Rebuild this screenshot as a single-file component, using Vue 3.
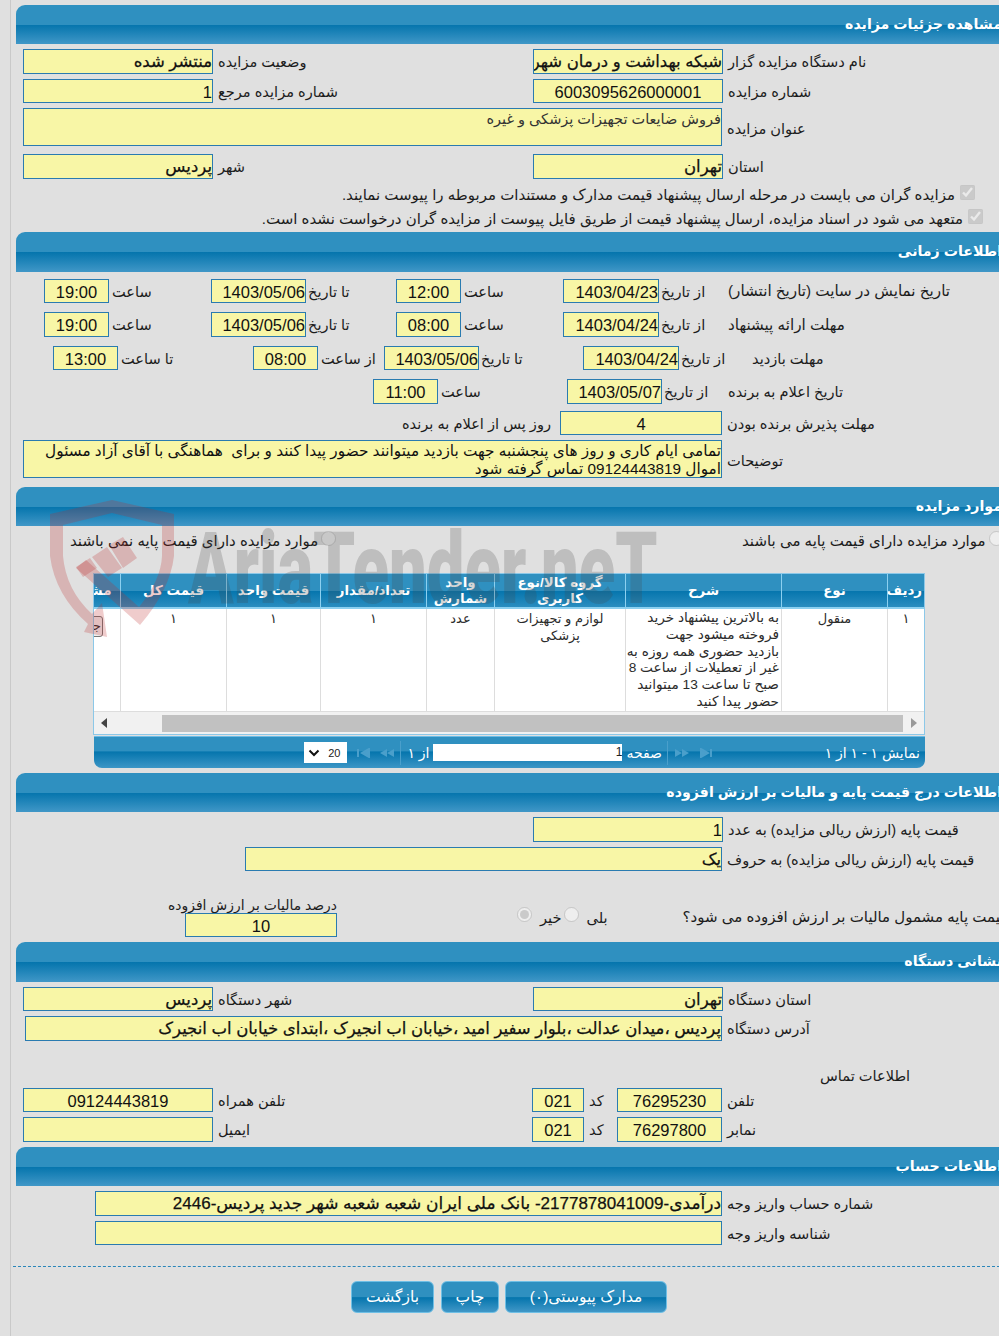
<script setup>
const headers = ['ردیف', 'نوع', 'شرح', 'گروه کالا/نوع کاربری', 'واحد شمارش', 'تعداد/مقدار', 'قیمت واحد', 'قیمت کل', 'مشاهده']
</script>

<template>
  <div class="page">
    <div class="sheet">
      <section class="sec first">
        <h2 class="head">مشاهده جزئیات مزایده</h2>
        <div class="r two mt5 h25">
          <div class="f"><div class="box w190 bold">منتشر شده</div><span class="lb">وضعیت مزایده</span></div>
          <div class="f"><div class="box w190 bold">شبکه بهداشت و درمان شهرستان پردیس</div><span class="lb">نام دستگاه مزایده گزار</span></div>
        </div>
        <div class="r two mt5 h24">
          <div class="f"><div class="box w190">1</div><span class="lb">شماره مزایده مرجع</span></div>
          <div class="f"><div class="box w190 c">6003095626000001</div><span class="lb">شماره مزایده</span></div>
        </div>
        <div class="f mt5 h38 pl">
          <div class="box area wide">فروش ضایعات تجهیزات پزشکی و غیره</div><span class="lb">عنوان مزایده</span>
        </div>
        <div class="r two mt8 h25">
          <div class="f"><div class="box w190 bold">پردیس</div><span class="lb">شهر</span></div>
          <div class="f"><div class="box w190 bold">تهران</div><span class="lb">استان</span></div>
        </div>
        <div class="check one"><input type="checkbox" checked disabled /><span>مزایده گران می بایست در مرحله ارسال پیشنهاد قیمت مدارک و مستندات مربوطه را پیوست نمایند.</span></div>
        <div class="check two-l"><input type="checkbox" checked disabled /><span>متعهد می شود در اسناد مزایده، ارسال پیشنهاد قیمت از طریق فایل پیوست از مزایده گران درخواست نشده است.</span></div>
      </section>

      <section class="sec">
        <h2 class="head tall">اطلاعات زمانی</h2>
        <div class="r t1 mt7 h24">
          <div class="f"><div class="box w64 c">19:00</div><span class="lb">ساعت</span></div>
          <div class="f"><div class="box w95">1403/05/06</div><span class="lb">تا تاریخ</span></div>
          <div class="f"><div class="box w64 c">12:00</div><span class="lb">ساعت</span></div>
          <div class="f"><div class="box w96">1403/04/23</div><span class="lb">از تاریخ</span></div>
          <span class="lb">تاریخ نمایش در سایت (تاریخ انتشار)</span>
        </div>
        <div class="r t1 mt9 h25">
          <div class="f"><div class="box w64 c">19:00</div><span class="lb">ساعت</span></div>
          <div class="f"><div class="box w95">1403/05/06</div><span class="lb">تا تاریخ</span></div>
          <div class="f"><div class="box w64 c">08:00</div><span class="lb">ساعت</span></div>
          <div class="f"><div class="box w96">1403/04/24</div><span class="lb">از تاریخ</span></div>
          <span class="lb">مهلت ارائه پیشنهاد</span>
        </div>
        <div class="r t3 mt9 h24">
          <div class="f"><div class="box w64 c">13:00</div><span class="lb">تا ساعت</span></div>
          <div class="f"><div class="box w64 c">08:00</div><span class="lb">از ساعت</span></div>
          <div class="f"><div class="box w95">1403/05/06</div><span class="lb">تا تاریخ</span></div>
          <div class="f"><div class="box w96">1403/04/24</div><span class="lb">از تاریخ</span></div>
          <span class="lb">مهلت بازدید</span>
        </div>
        <div class="r t4 mt9 h25">
          <div class="f"><div class="box w64 c">11:00</div><span class="lb">ساعت</span></div>
          <div class="f"><div class="box w95">1403/05/07</div><span class="lb">از تاریخ</span></div>
          <span class="lb">تاریخ اعلام به برنده</span>
        </div>
        <div class="r t5 mt7 h24">
          <span class="lb">روز پس از اعلام به برنده</span>
          <div class="f"><div class="box w162 c">4</div><span class="lb">مهلت پذیرش برنده بودن</span></div>
        </div>
        <div class="f mt5 h38 pl">
          <div class="box area wide"><span class="note">تمامی ایام کاری و روز های پنجشنبه جهت بازدید میتوانند حضور پیدا کنند و برای&nbsp; هماهنگی با آقای آزاد مسئول<br />اموال 09124443819 تماس گرفته شود</span></div><span class="lb">توضیحات</span>
        </div>
      </section>

      <section class="sec s3">
        <h2 class="head">موارد مزایده</h2>
        <div class="radios">
          <label class="rad r-left"><span>موارد مزایده دارای قیمت پایه نمی باشند</span><input type="radio" name="b" disabled /></label>
          <label class="rad r-right"><span>موارد مزایده دارای قیمت پایه می باشند</span><input type="radio" name="b" disabled /></label>
        </div>
        <div class="grid">
          <div class="clip">
            <table>
              <thead>
                <tr><th v-for="h in headers" :key="h">{{ h }}</th></tr>
              </thead>
              <tbody>
                <tr>
                  <td>۱</td>
                  <td>منقول</td>
                  <td class="desc">به بالاترین پیشنهاد خرید<br />فروخته میشود جهت<br />بازدید حضوری همه روزه به<br />غیر از تعطیلات از ساعت 8<br />صبح تا ساعت 13 میتوانید<br />حضور پیدا کنید</td>
                  <td>لوازم و تجهیزات<br />پزشکی</td>
                  <td>عدد</td>
                  <td>۱</td>
                  <td>۱</td>
                  <td>۱</td>
                  <td class="act"><span class="mini">جزئیات</span></td>
                </tr>
              </tbody>
            </table>
          </div>
          <div class="hscroll">
            <svg class="arr" width="8" height="12" viewBox="0 0 8 12"><path d="M7 1v10L1 6z" fill="#444" /></svg>
            <div class="thumb"></div>
            <svg class="arr" width="8" height="12" viewBox="0 0 8 12"><path d="M1 1v10l6-5z" fill="#999" /></svg>
          </div>
        </div>
        <div class="pager">
          <span class="p-info">نمایش ۱ - ۱ از ۱</span>
          <div class="p-mid">
            <svg class="nav" width="14" height="10" viewBox="0 0 14 10"><path d="M2 1v8l7-4zM12 1v8" stroke="#4a9fcb" stroke-width="2" fill="#4a9fcb" /></svg>
            <svg class="nav n0" width="16" height="10" viewBox="0 0 16 10"><path d="M1 1v8l7-4zM8 1v8l7-4z" fill="#4a9fcb" /></svg>
            <i class="sep"></i>
            <span class="p-txt">صفحه</span>
            <div class="p-in">1</div>
            <span class="p-txt">از ۱</span>
            <i class="sep"></i>
            <svg class="nav" width="16" height="10" viewBox="0 0 16 10"><path d="M8 1v8L1 5zM15 1v8L8 5z" fill="#4a9fcb" /></svg>
            <svg class="nav" width="14" height="10" viewBox="0 0 14 10"><path d="M2 1v8M13 1v8L6 5z" stroke="#4a9fcb" stroke-width="2" fill="#4a9fcb" /></svg>
            <div class="p-sel"><span>20</span><svg width="12" height="8" viewBox="0 0 12 8"><path d="M1.5 1.5 6 6l4.5-4.5" fill="none" stroke="#111" stroke-width="2" /></svg></div>
          </div>
        </div>
      </section>

      <section class="sec s4">
        <h2 class="head">اطلاعات درج قیمت پایه و مالیات بر ارزش افزوده</h2>
        <div class="r one-col mt5 h25">
          <div class="f"><div class="box w190">1</div><span class="lb">قیمت پایه (ارزش ریالی مزایده) به عدد</span></div>
        </div>
        <div class="r yek mt5 h24">
          <div class="f"><div class="box w477 bold">یک</div><span class="lb">قیمت پایه (ارزش ریالی مزایده) به حروف</span></div>
        </div>
        <div class="tax">
          <div class="tax-l">
            <span class="lb">درصد مالیات بر ارزش افزوده</span>
            <div class="box w152 h24 c">10</div>
          </div>
          <div class="tax-r">
            <input class="radio-a" type="radio" name="v" checked disabled />
            <span class="lb">خیر</span>
            <input class="radio-b" type="radio" name="v" disabled />
            <span class="lb">بلی</span>
            <span class="lb q">قیمت پایه مشمول مالیات بر ارزش افزوده می شود؟</span>
          </div>
        </div>
      </section>

      <section class="sec s5">
        <h2 class="head tall">نشانی دستگاه</h2>
        <div class="r two mt5 h24">
          <div class="f"><div class="box w190 bold">پردیس</div><span class="lb">شهر دستگاه</span></div>
          <div class="f"><div class="box w190 bold">تهران</div><span class="lb">استان دستگاه</span></div>
        </div>
        <div class="f mt5 h25 pl2">
          <div class="box w697 bold">پردیس ،میدان عدالت ،بلوار سفیر امید ،خیابان اب انجیرک ،ابتدای خیابان اب انجیرک</div><span class="lb">آدرس دستگاه</span>
        </div>
        <div class="contact">اطلاعات تماس</div>
        <div class="r phones h24">
          <div class="f"><div class="box w190 c">09124443819</div><span class="lb">تلفن همراه</span></div>
          <div class="f"><div class="box w52 c">021</div><span class="lb">کد</span></div>
          <div class="f"><div class="box w105 c">76295230</div><span class="lb">تلفن</span></div>
        </div>
        <div class="r phones mt5 h25">
          <div class="f"><div class="box w190"></div><span class="lb">ایمیل</span></div>
          <div class="f"><div class="box w52 c">021</div><span class="lb">کد</span></div>
          <div class="f"><div class="box w105 c">76297800</div><span class="lb">نمابر</span></div>
        </div>
      </section>

      <section class="sec s6">
        <h2 class="head">اطلاعات حساب</h2>
        <div class="f mt5 h25 pl3">
          <div class="box w627 bold acc">درآمدی-2177878041009- بانک ملی ایران شعبه شعبه شهر جدید پردیس-2446</div><span class="lb">شماره حساب واریز وجه</span>
        </div>
        <div class="f mt5 h24 pl3">
          <div class="box w627"></div><span class="lb">شناسه واریز وجه</span>
        </div>
        <div class="dash"></div>
        <div class="btns">
          <button class="btn b1" type="button">بازگشت</button>
          <button class="btn b2" type="button">چاپ</button>
          <button class="btn b3" type="button">مدارک پیوستی(۰)</button>
        </div>
      </section>
    </div>

    <div class="wm-text">AriaTender.neT</div>
    <svg class="wm-shield" width="140" height="150" viewBox="45 495 140 150">
      <path d="M50 514 112 500 174 514V556Q170 590 140 625L76 568 86 560 139 607Q161 580 162 556V525L112 513 63 525V556Q66 590 92 614L102 603 107 637 84 632 88 624Q55 595 50 556Z" />
      <path d="M76 567 90 558 97 568 83 577ZM92 557 107 547 122 568 108 577ZM109 545 123 537 137 558 123 568Z" />
    </svg>
  </div>
</template>

<style scoped>
.page {
  position: relative;
  width: 999px;
  height: 1336px;
  overflow: hidden;
  background: #e0e0e0;
  padding-left: 10px;
  box-sizing: border-box;
  font-family: "Liberation Sans", "DejaVu Sans", sans-serif;
  color: #1c1c1c;
  font-size: 14.6px;
}
.sheet {
  width: 1000px;
  height: 1336px;
  box-sizing: border-box;
  border-left: 1px solid #c9c9c9;
  padding-left: 5px;
}
.sec.first { padding-top: 5px; }
.head {
  margin: 0;
  height: 39px;
  box-sizing: border-box;
  border-top-left-radius: 9px;
  background: linear-gradient(#2f90c0 0, #2f90c0 50%, #0575ad 51%, #4097c7 100%);
  color: #fff;
  font-size: 14.2px;
  font-weight: bold;
  line-height: 39px;
  direction: rtl;
  text-align: right;
  padding-right: 8px;
  white-space: nowrap;
  overflow: hidden;
}
.head.tall { height: 40px; }
.r { display: grid; padding-left: 7px; align-items: center; }
.r > .lb { justify-self: start; }
.two { grid-template-columns: 510px auto; }
.t1 { grid-template-columns: 167px 185px 167px 165px auto; padding-left: 28px; }
.t1 > .lb { font-size: 15.2px; }
.t3 { grid-template-columns: 200px 131px 199px 169px auto; padding-left: 37px; }
.t4 { grid-template-columns: 194px 161px auto; padding-left: 357px; }
.t5 { grid-template-columns: 544px auto; padding-left: 0; }
.r.t5 > .lb { justify-self: end; margin-right: 9px; }
.one-col { grid-template-columns: auto; padding-left: 517px; }
.yek { grid-template-columns: auto; padding-left: 229px; }
.phones { grid-template-columns: 509px 85px auto; }
.f { display: flex; align-items: center; gap: 5px; min-width: 0; }
.t1 .f, .t3 .f, .t4 .f { gap: 3px; }
.w95 + .lb, .w96 + .lb { margin-left: -1px; }
.h38 > .lb { margin-top: 3px; }
.pl { padding-left: 7px; }
.pl2 { padding-left: 9px; }
.pl3 { padding-left: 79px; }
.mt5 { margin-top: 5px; }
.mt7 { margin-top: 7px; }
.mt8 { margin-top: 8px; }
.mt9 { margin-top: 9px; }
.h24, .h24 .box { height: 24px; }
.h25, .h25 .box { height: 25px; }
.h38, .h38 .box { height: 38px; }
.box {
  box-sizing: border-box;
  flex: none;
  border: 1px solid #2a7bb0;
  background: #f8f6a6;
  color: #111;
  direction: rtl;
  text-align: right;
  white-space: nowrap;
  overflow: hidden;
  font-size: 16.5px;
  line-height: 24px;
}
.bold { font-size: 16.5px; line-height: 23px; -webkit-text-stroke: 0.25px #111; }
.acc { font-size: 17px; }
.c { text-align: center; }
.area { font-size: 14.5px; line-height: 18px; color: #333; padding-top: 1px; }
.note { font-size: 15.3px; line-height: 18px; display: block; color: #111; }
.wide { width: 699px; }
.w190 { width: 190px; }
.w64 { width: 65px; }
.w95 { width: 95px; }
.w96 { width: 96px; }
.w162 { width: 162px; }
.w477 { width: 477px; }
.w152 { width: 152px; }
.w697 { width: 697px; }
.w52 { width: 52px; }
.w105 { width: 105px; }
.w627 { width: 627px; }
.lb { direction: rtl; white-space: nowrap; font-size: 14.6px; }

.check {
  display: flex;
  direction: rtl;
  align-items: center;
  height: 24px;
  white-space: nowrap;
  gap: 5px;
  font-size: 15px;
}
.check input { width: 15px; height: 15px; margin: 0 0 6px 0; }
.check.one { margin-top: 4px; padding-right: 35px; }
.check.two-l { padding-right: 27px; margin-bottom: 1px; }

.s3 { margin-top: 9px; }
.s3 .radios { position: relative; height: 47px; }
.rad { position: absolute; top: 5px; display: flex; align-items: center; gap: 3px; white-space: nowrap; direction: ltr; font-size: 15px; }
.rad input { width: 15px; height: 15px; margin: 0 0 4px 0; }
.r-left { left: 54px; }
.r-right { left: 726px; }

.grid {
  margin-left: 77px;
  width: 832px;
  box-sizing: border-box;
  border: 1px solid #8cc8e8;
  background: #fff;
}
.clip { overflow: hidden; direction: rtl; }
table {
  border-collapse: separate;
  border-spacing: 0;
  table-layout: fixed;
  width: 874px;
  direction: rtl;
}
th {
  height: 35px;
  padding: 0 2px;
  box-sizing: border-box;
  background: linear-gradient(#2f90c0 0, #2f90c0 50%, #0575ad 51%, #2a8dc0 100%);
  color: #fff;
  font-size: 13.4px;
  font-weight: bold;
  line-height: 16px;
  border-left: 1px solid #8cd0f0;
  border-bottom: 2px solid #8cd0f0;
  white-space: normal;
  overflow: hidden;
}
th:nth-child(1) { width: 37px; }
th:nth-child(2) { width: 106px; }
th:nth-child(3) { width: 156px; }
th:nth-child(4) { width: 131px; }
th:nth-child(5) { width: 68px; }
th:nth-child(6) { width: 106px; }
th:nth-child(7) { width: 94px; }
th:nth-child(8) { width: 106px; }
th:nth-child(9) { width: 70px; }
td {
  height: 103px;
  box-sizing: border-box;
  padding: 1px 2px 0;
  vertical-align: top;
  text-align: center;
  font-size: 13px;
  line-height: 17px;
  color: #2b2b2b;
  border-left: 1px solid #ddd;
  border-bottom: 1px solid #ddd;
  overflow: hidden;
  white-space: nowrap;
}
td.desc { text-align: right; font-size: 13.7px; line-height: 16.8px; }
td.act { text-align: right; padding: 7px 17px 0 0; }
.mini {
  display: inline-block;
  height: 21px;
  box-sizing: border-box;
  padding: 0 1px;
  border: 1px solid #777;
  border-radius: 3px;
  background: #efefef;
  font-size: 13px;
}
.hscroll {
  display: flex;
  align-items: center;
  height: 22px;
  background: #f1f1f1;
  direction: ltr;
}
.arr { flex: none; }
.hscroll .arr:first-child { margin: 0 0 0 6px; }
.hscroll .arr:last-child { margin-left: 7px; }
.thumb { margin-left: 54px; width: 741px; height: 17px; background: #c1c1c1; }
.pager {
  margin: 1px 0 0 78px;
  width: 831px;
  height: 32px;
  box-sizing: border-box;
  border-top: 1px solid #6cbce6;
  border-bottom-left-radius: 8px;
  border-bottom-right-radius: 8px;
  background: linear-gradient(#2f90c0 0, #2f90c0 45%, #0575ad 48%, #3c96c6 100%);
  display: flex;
  align-items: center;
  direction: rtl;
  color: #fff;
}
.p-info { margin-right: 5px; font-size: 14px; white-space: nowrap; flex: none; width: 99px; text-align: right; }
.p-mid { display: flex; align-items: center; direction: rtl; margin-right: 108px; }
.p-txt { font-size: 14px; white-space: nowrap; }
.nav { flex: none; margin-left: 9px; }
.nav.n0 { margin-left: 0; }
.sep { width: 1px; height: 24px; background: #4a9fcb; margin: 0 6px 0 5px; flex: none; }
.p-in {
  width: 189px;
  height: 17px;
  background: #fff;
  color: #222;
  font-size: 12px;
  line-height: 17px;
  text-align: right;
  margin: 0 4px;
  flex: none;
}
.p-sel {
  width: 43px;
  height: 21px;
  background: #fff;
  color: #222;
  display: flex;
  align-items: center;
  justify-content: space-between;
  padding: 0 7px 0 4px;
  box-sizing: border-box;
  font-size: 11px;
  direction: rtl;
}
.s4 { margin-top: 5px; }
.tax { position: relative; height: 66px; }
.tax-l { position: absolute; left: 153px; width: 168px; top: 26px; display: flex; flex-direction: column; align-items: flex-end; }
.tax-l .lb { line-height: 16px; font-size: 13.9px; }
.tax-r { position: absolute; left: 501px; top: 36px; display: flex; align-items: center; white-space: nowrap; }
.tax-r input { width: 15px; height: 15px; margin: 0 0 5px; }
.radio-a + .lb { margin-left: 8px; }
.radio-b { margin-left: 3px !important; }
.radio-b + .lb { margin: 0 0 0 7px; }
.q { margin-left: 75px; font-size: 15px; }
.s5 { margin-top: 5px; }
.contact { height: 47px; padding: 26px 0 0 804px; box-sizing: border-box; direction: rtl; text-align: left; }
.s6 { margin-top: 5px; }
.dash { margin: 21px 0 0 -3px; border-top: 1px dashed #2a86ba; }
.btns { display: flex; margin: 14px 0 0 335px; gap: 7px; direction: ltr; }
.btn {
  box-sizing: border-box;
  height: 32px;
  border: 1px solid #6fbfe5;
  border-radius: 6px;
  background: linear-gradient(#2f90c0 0, #2f90c0 50%, #0575ad 52%, #4097c7 100%);
  color: #fff;
  font-family: inherit;
  font-size: 15.5px;
  direction: rtl;
  padding: 0;
}
.b1 { width: 83px; }
.b2 { width: 58px; }
.b3 { width: 162px; margin-left: -1px; }
.wm-text {
  position: absolute;
  left: 188px;
  top: 504px;
  font-family: Roboto, sans-serif;
  font-weight: 900;
  font-size: 100px;
  line-height: 130px;
  color: rgba(70, 70, 70, 0.22);
  transform: scaleX(0.67);
  transform-origin: left top;
  white-space: nowrap;
  pointer-events: none;
}
.wm-shield {
  position: absolute;
  left: 45px;
  top: 495px;
  fill: rgba(190, 40, 40, 0.24);
  pointer-events: none;
}
</style>

<style>
html, body { margin: 0; background: #e0e0e0; }
</style>
